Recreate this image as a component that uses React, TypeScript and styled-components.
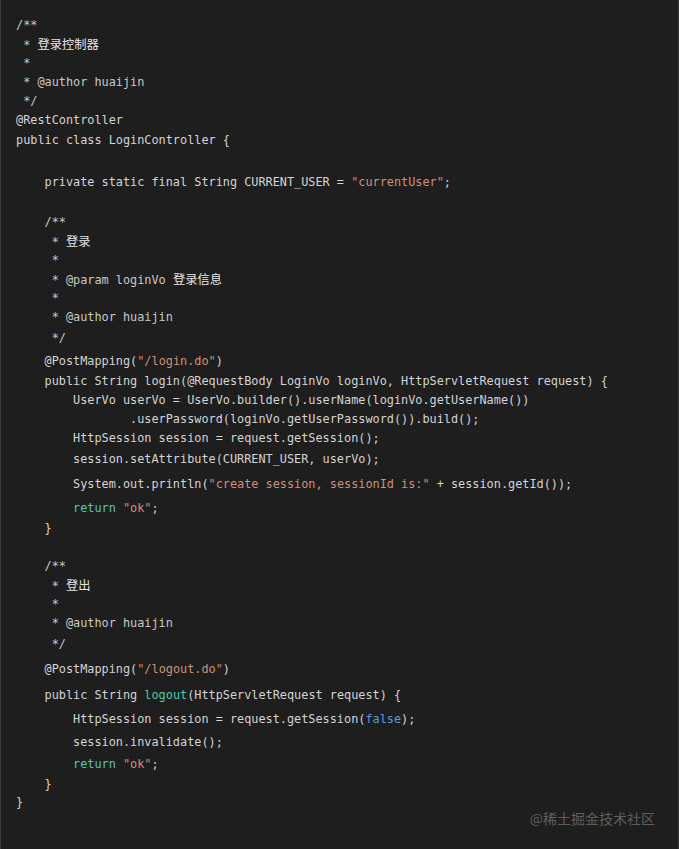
import React from "react";
import styled, { createGlobalStyle } from "styled-components";

const Global = createGlobalStyle`
  html, body { margin: 0; padding: 0; background: #1e1e1e; }
`;

const Frame = styled.div`
  position: relative;
  box-sizing: border-box;
  width: 679px;
  height: 849px;
  background: #1e1e1e;
  border-left: 1px solid #3a3a3a;
  border-right: 1px solid #3a3a3a;
  padding: 15px 0 0 15px;
  font-family: "DejaVu Sans Mono", "Noto Sans CJK SC", monospace;
  font-size: 11.85px;
  color: #d4d4d4;
  overflow: hidden;
`;

const Code = styled.div`
  display: flex;
  flex-direction: column;
`;

const Line = styled.div<{ $h: number }>`
  height: ${(p) => p.$h}px;
  line-height: ${(p) => p.$h}px;
  white-space: pre;
`;

type Kind = "p" | "s" | "k" | "b" | "c" | "m";

const colors: Record<Kind, string> = {
  p: "#d4d4d4",
  s: "#ce9178",
  k: "#4ec9b0",
  b: "#569cd6",
  c: "#e6e6e6",
  m: "#c8c8c8",
};

const Token = styled.span<{ $kind: Kind }>`
  color: ${(p) => colors[p.$kind]};
  font-family: ${(p) =>
    p.$kind === "c"
      ? `"Noto Sans CJK SC", sans-serif`
      : `"DejaVu Sans Mono", "Noto Sans CJK SC", monospace`};
  font-size: ${(p) => (p.$kind === "c" ? "12.3px" : "11.85px")};
`;

const Watermark = styled.div`
  position: absolute;
  right: 23px;
  bottom: 21px;
  font-family: "Noto Sans CJK SC", sans-serif;
  font-size: 14px;
  line-height: 20px;
  color: #5e5e5e;
`;

type Seg = [Kind, string];
type L = { h: number; segs: Seg[] };

const lines: L[] = [
  { h: 20, segs: [["m", "/**"]] },
  { h: 18, segs: [["m", " * "], ["c", "登录控制器"]] },
  { h: 20, segs: [["m", " *"]] },
  { h: 18, segs: [["m", " * @author huaijin"]] },
  { h: 20, segs: [["m", " */"]] },
  { h: 19, segs: [["p", "@RestController"]] },
  { h: 21, segs: [["p", "public class LoginController {"]] },
  { h: 21, segs: [["p", ""]] },
  { h: 20, segs: [["p", "    private static final String CURRENT_USER = "], ["s", "\"currentUser\""], ["p", ";"]] },
  { h: 20, segs: [["p", ""]] },
  { h: 20, segs: [["m", "    /**"]] },
  { h: 19, segs: [["m", "     * "], ["c", "登录"]] },
  { h: 19, segs: [["m", "     *"]] },
  { h: 19, segs: [["m", "     * @param loginVo "], ["c", "登录信息"]] },
  { h: 19, segs: [["m", "     *"]] },
  { h: 19, segs: [["m", "     * @author huaijin"]] },
  { h: 23, segs: [["m", "     */"]] },
  { h: 22, segs: [["p", "    @PostMapping("], ["s", "\"/login.do\""], ["p", ")"]] },
  { h: 19, segs: [["p", "    public String login(@RequestBody LoginVo loginVo, HttpServletRequest request) {"]] },
  { h: 19, segs: [["p", "        UserVo userVo = UserVo.builder().userName(loginVo.getUserName())"]] },
  { h: 19, segs: [["p", "                .userPassword(loginVo.getUserPassword()).build();"]] },
  { h: 19, segs: [["p", "        HttpSession session = request.getSession();"]] },
  { h: 23, segs: [["p", "        session.setAttribute(CURRENT_USER, userVo);"]] },
  { h: 26, segs: [["p", "        System.out.println("], ["s", "\"create session, sessionId is:\""], ["p", " + session.getId());"]] },
  { h: 22, segs: [["k", "        return "], ["s", "\"ok\""], ["p", ";"]] },
  { h: 19, segs: [["p", "    }"]] },
  { h: 19, segs: [["p", ""]] },
  { h: 19, segs: [["m", "    /**"]] },
  { h: 19, segs: [["m", "     * "], ["c", "登出"]] },
  { h: 19, segs: [["m", "     *"]] },
  { h: 19, segs: [["m", "     * @author huaijin"]] },
  { h: 23, segs: [["m", "     */"]] },
  { h: 26, segs: [["p", "    @PostMapping("], ["s", "\"/logout.do\""], ["p", ")"]] },
  { h: 26, segs: [["p", "    public String "], ["k", "logout"], ["p", "(HttpServletRequest request) {"]] },
  { h: 23, segs: [["p", "        HttpSession session = request.getSession("], ["b", "false"], ["p", ");"]] },
  { h: 22, segs: [["p", "        session.invalidate();"]] },
  { h: 22, segs: [["k", "        return "], ["s", "\"ok\""], ["p", ";"]] },
  { h: 18, segs: [["p", "    }"]] },
  { h: 19, segs: [["p", "}"]] },
];

export default function App() {
  return (
    <>
      <Global />
      <Frame>
        <Code>
          {lines.map((l, i) => (
            <Line key={i} $h={l.h}>
              {l.segs.map(([k, t], j) => (
                <Token key={j} $kind={k}>
                  {t}
                </Token>
              ))}
            </Line>
          ))}
        </Code>
        <Watermark>@稀土掘金技术社区</Watermark>
      </Frame>
    </>
  );
}
